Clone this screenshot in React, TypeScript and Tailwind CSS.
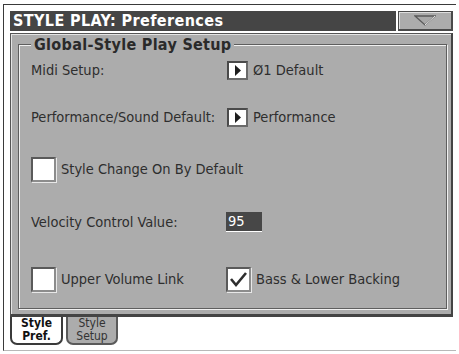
import React from "react";

const F = { fontFamily: '"DejaVu Sans Condensed", "DejaVu Sans", sans-serif' };

function Arrow() {
  return (
    <div className="w-[21px] h-[19px] bg-white border-2 border-[#4a4a4a] border-r-[#6a6a6a] border-b-[#6a6a6a] flex items-center justify-center">
      <svg width="8" height="11" viewBox="0 0 8 11">
        <polygon points="1,0 7,5.5 1,11" fill="#1e1e1e" />
      </svg>
    </div>
  );
}

function Check({ checked }: { checked?: boolean }) {
  return (
    <div className="w-[25px] h-[25px] bg-white border-2 border-t-[#5a5a5a] border-l-[#5a5a5a] border-b-[#8c8c8c] border-r-[#8c8c8c] shadow-[1px_1px_0_#e8e8e8] flex items-center justify-center">
      {checked && (
        <svg width="19" height="17" viewBox="0 0 19 17">
          <polyline points="2,8 7,14 17,2" fill="none" stroke="#2e2e2e" strokeWidth="2.6" strokeLinejoin="miter" />
        </svg>
      )}
    </div>
  );
}

export default function App() {
  return (
    <div className="w-[459px] h-[354px] bg-white pt-[4px] pl-[3px] overflow-hidden" style={F}>
      <div className="w-[453px] h-[347px] border-t border-l border-[#3a3a3a] border-b border-b-[#b8b8b8] pl-[6px] pt-[6px]">
        {/* title row */}
        <div className="flex h-[20px] gap-[2px]">
          <div className="w-[386px] h-full bg-[#454545] flex items-center pl-[3px]">
            <span className="text-white font-bold text-[16px] leading-none tracking-[0.4px]">STYLE PLAY: Preferences</span>
          </div>
          <div className="w-[55px] h-full bg-[#acacac] border border-[#4a4a4a] border-r-2 border-b-2 shadow-[inset_1px_1px_0_#dedede] flex items-center justify-center">
            <svg width="22" height="11" viewBox="0 0 22 11">
              <polygon points="1,1 21,1 11,10" fill="#a8a8a8" stroke="#5a5a5a" strokeWidth="1.3" />
              <line x1="11" y1="10" x2="21" y2="1" stroke="#e8e8e8" strokeWidth="1" />
            </svg>
          </div>
        </div>
        {/* panel */}
        <div className="mt-[2px] w-[443px] h-[284px] bg-[#acacac] border-t border-l border-[#555] border-r-2 border-b-[3px] border-r-[#444] border-b-[#444] shadow-[inset_1px_1px_0_#e4e4e4] pl-[7px] pt-[10px]">
          <div className="relative w-[429px] h-[265px] border border-[#5e5e5e] shadow-[1px_1px_0_#f0f0f0,inset_1px_1px_0_#f0f0f0] text-[#2e2e2e] text-[14.5px] leading-none">
            <div className="absolute left-[12px] top-[-8px] bg-[#acacac] px-[3px] font-bold text-[16px] leading-none text-[#2a2a2a] tracking-[0.3px]">
              Global-Style Play Setup
            </div>
            <div className="pl-[12px] pt-[16px] flex flex-col">
              <div className="flex items-center h-[19px]">
                <span className="w-[196px]">Midi Setup:</span>
                <Arrow />
                <span className="ml-[5px]">Ø1 Default</span>
              </div>
              <div className="flex items-center h-[19px] mt-[28px]">
                <span className="w-[196px]">Performance/Sound Default:</span>
                <Arrow />
                <span className="ml-[5px]">Performance</span>
              </div>
              <div className="flex items-center h-[25px] mt-[30px]">
                <Check />
                <span className="ml-[5px]">Style Change On By Default</span>
              </div>
              <div className="flex items-center h-[20px] mt-[30px]">
                <span className="w-[195px]">Velocity Control Value:</span>
                <div className="w-[36px] h-[20px] bg-[#474747] border-b border-white text-white flex items-center pl-[2px]">95</div>
              </div>
              <div className="flex items-center h-[25px] mt-[35px]">
                <div className="w-[195px] flex items-center">
                  <Check />
                  <span className="ml-[5px]">Upper Volume Link</span>
                </div>
                <Check checked />
                <span className="ml-[5px]">Bass &amp; Lower Backing</span>
              </div>
            </div>
          </div>
        </div>
        {/* tabs */}
        <div className="flex gap-[3px] h-[28px]">
          <div className="w-[53px] h-full bg-white border-2 border-t-0 border-[#3a3a3a] rounded-b-[7px] flex flex-col items-center justify-center text-[12px] leading-[13px] font-bold text-[#111]">
            <span>Style</span>
            <span>Pref.</span>
          </div>
          <div className="w-[52px] h-full bg-[#acacac] border-2 border-t-0 border-[#5a5a5a] rounded-b-[7px] flex flex-col items-center justify-center text-[12px] leading-[13px] text-[#333]">
            <span>Style</span>
            <span>Setup</span>
          </div>
        </div>
      </div>
    </div>
  );
}
